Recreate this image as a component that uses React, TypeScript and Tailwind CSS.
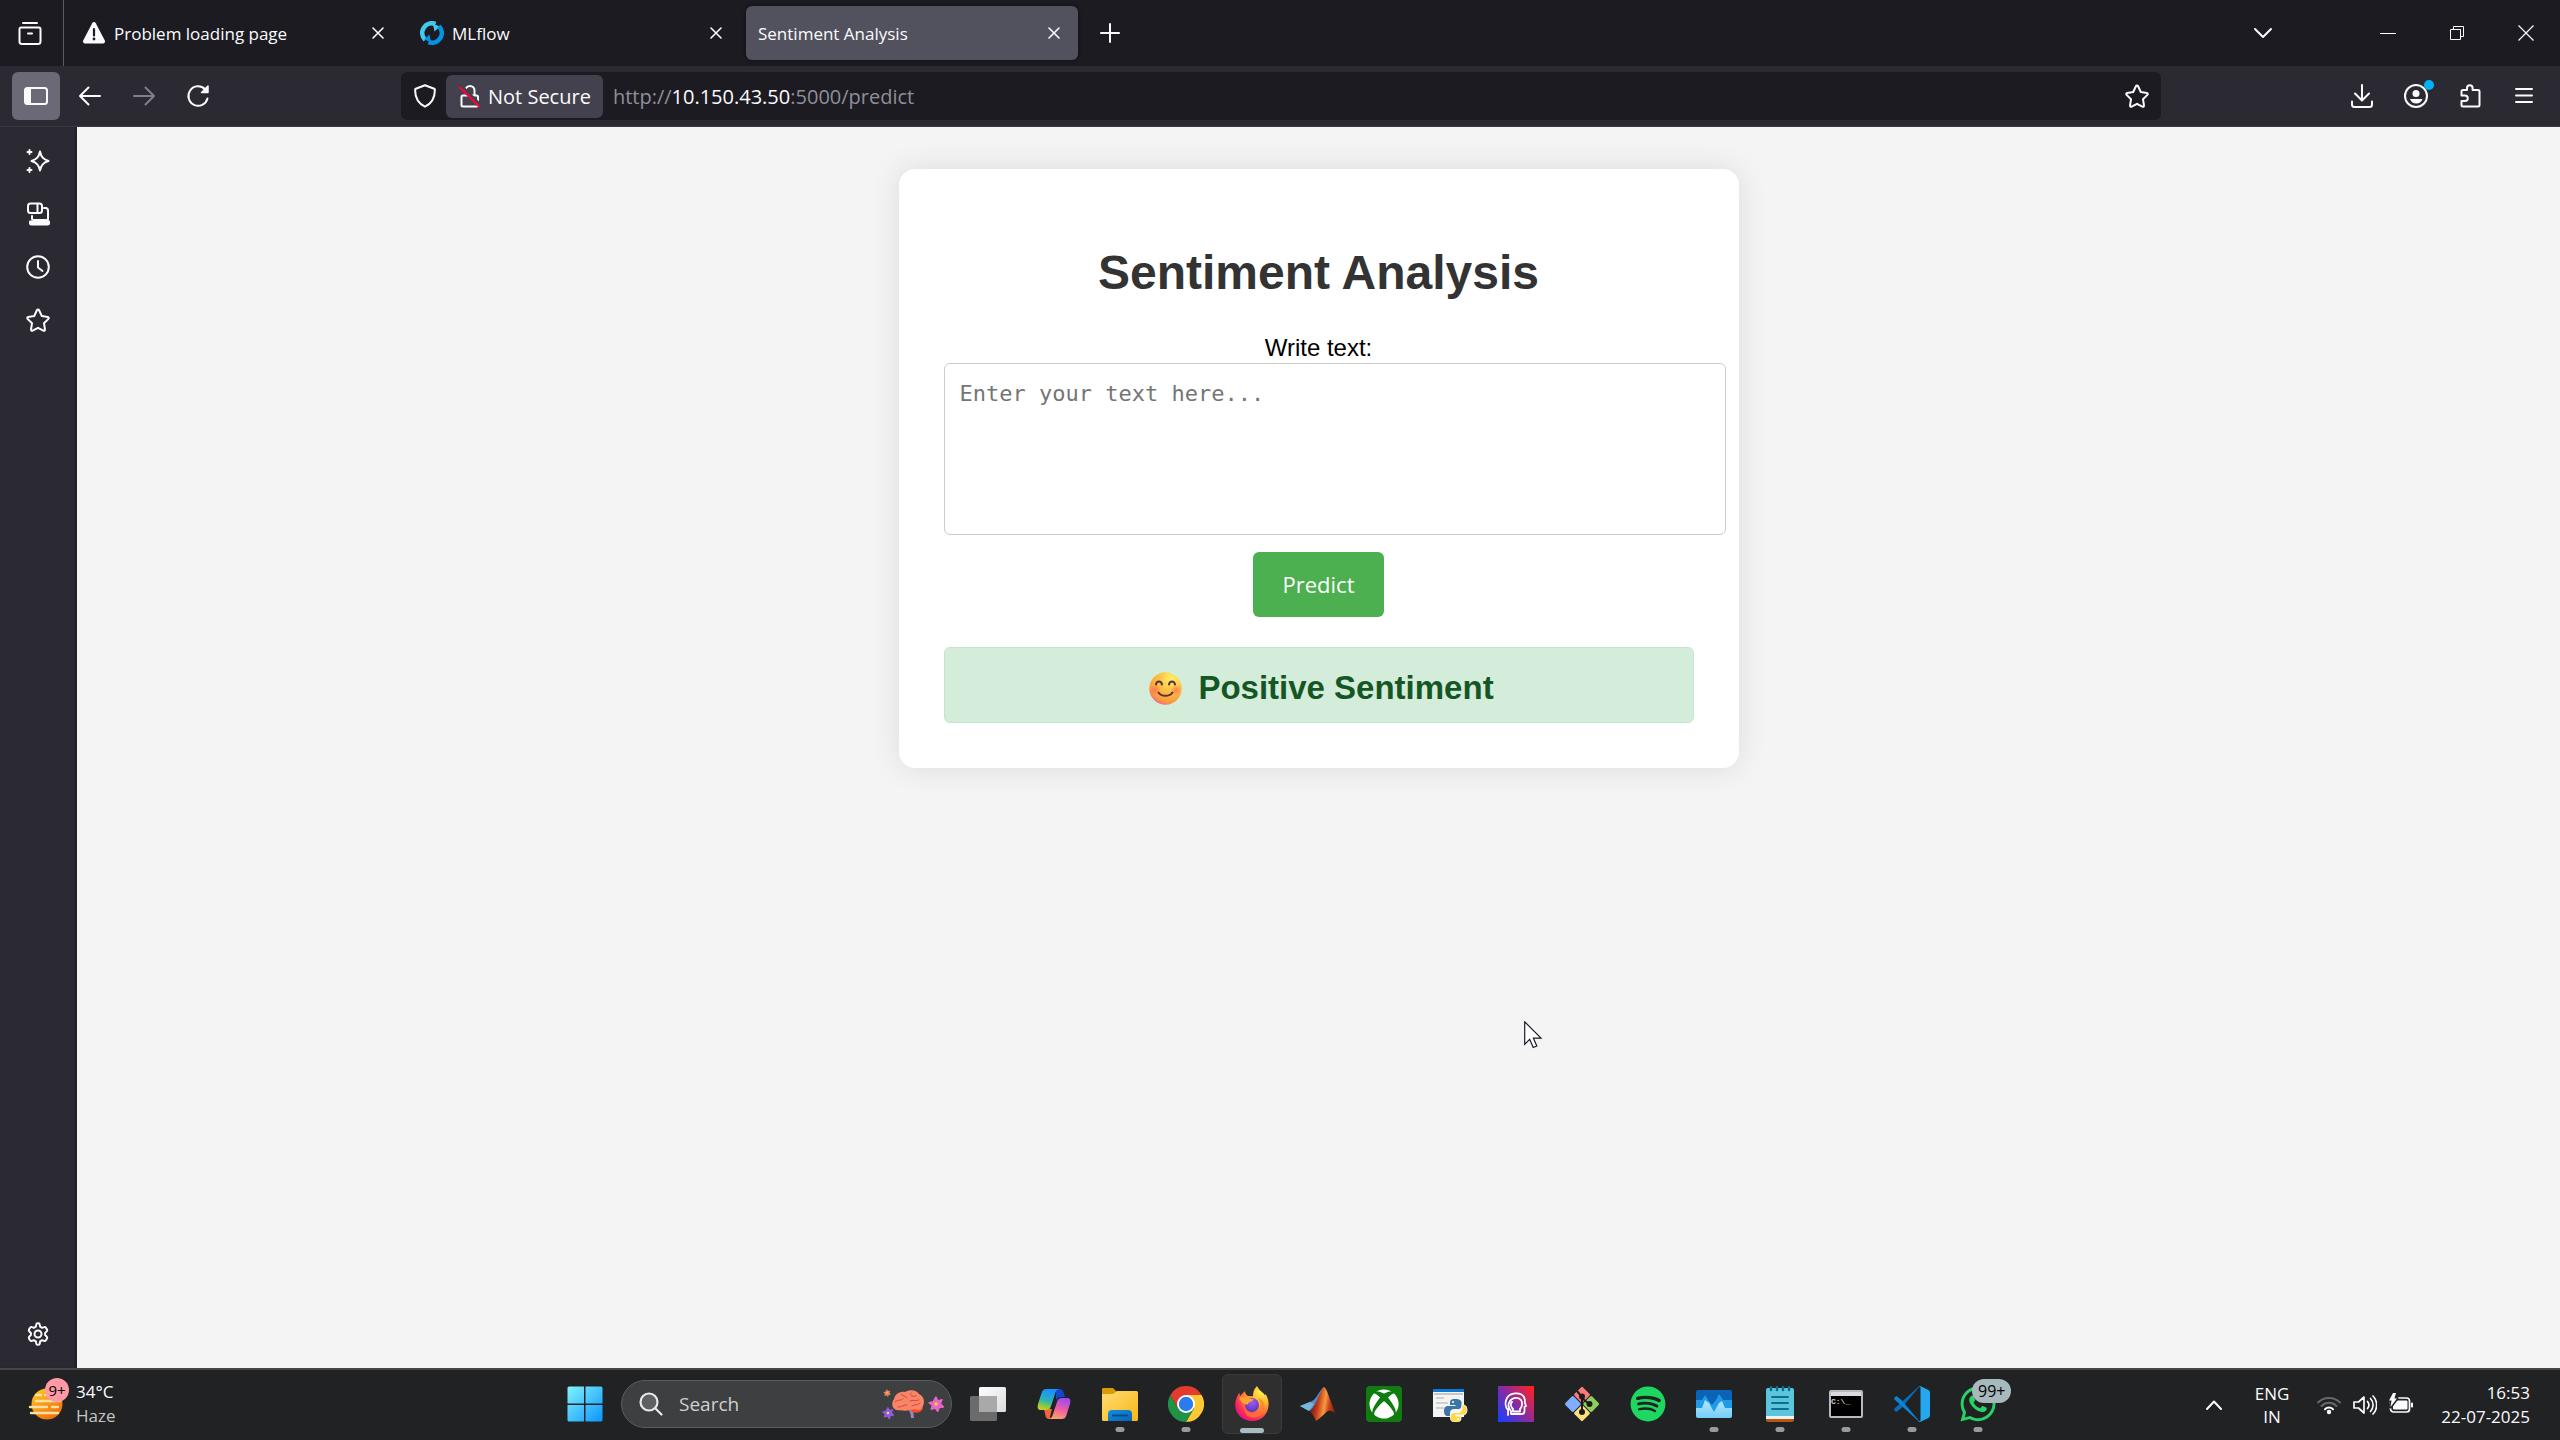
import React from "react";
import type { ReactNode } from "react";
import { FaSpotify, FaWhatsapp, FaXbox } from "react-icons/fa";

type LineProps = { children: ReactNode; className?: string; box?: string };

function Line({ children, className = "size-6", box = "0 0 24 24" }: LineProps) {
  return (
    <svg
      viewBox={box}
      className={className}
      fill="none"
      stroke="currentColor"
      strokeWidth="2"
      strokeLinecap="round"
      strokeLinejoin="round"
      aria-hidden="true"
    >
      {children}
    </svg>
  );
}

const CloseGlyph = () => (
  <Line className="size-3" box="0 0 12 12">
    <path d="M1 1l10 10M11 1L1 11" strokeWidth="1.6" />
  </Line>
);

const StarIcon = () => (
  <Line>
    <path d="M12 1.6c.5 0 .9.3 1.1.7l2.7 5.7 6 .9c1 .2 1.300 1.300.6 2l-4.400 4.400 1 6.200c.2.9-.8 1.600-1.600 1.200L12 19.800l-5.400 2.900c-.8.4-1.800-.3-1.600-1.200l1-6.200L1.600 10.900c-.7-.7-.4-1.800.6-2l6-.9 2.700-5.700c.2-.4.6-.7 1.100-.7z" />
  </Line>
);

/* ---------- Tab strip ---------- */

const WarningIcon = () => (
  <svg viewBox="0 0 24 24" className="size-6" aria-hidden="true">
    <path d="M10.200 2.200c.8-1.500 2.800-1.500 3.600 0l9 17.200c.7 1.400-.3 3-1.800 3H3c-1.500 0-2.500-1.600-1.800-3z" fill="#fbfbfe" />
    <path d="M12 8v6.500" stroke="#1c1b22" strokeWidth="2.200" strokeLinecap="round" />
    <circle cx="12" cy="18" r="1.400" fill="#1c1b22" />
  </svg>
);

const MlflowIcon = () => (
  <svg viewBox="0 0 24 24" className="size-6" aria-hidden="true">
    <path d="M5.200 18.800A9.600 9.600 0 0 1 15.500 3" fill="none" stroke="#43c9ed" strokeWidth="4.600" />
    <path d="M13 3l7 2.500-5.500 5z" fill="#43c9ed" />
    <path d="M18.800 5.200A9.600 9.600 0 0 1 8.500 21" fill="none" stroke="#0194e2" strokeWidth="4.600" />
    <path d="M11 21l-7-2.500 5.500-5z" fill="#0194e2" />
  </svg>
);

type TabProps = { title: string; icon?: ReactNode; active?: boolean };

function Tab({ title, icon, active = false }: TabProps) {
  return (
    <div
      role="tab"
      aria-selected={active}
      className={
        active
          ? "flex h-[54px] w-[332px] items-center gap-2 rounded-md bg-[#52525e] px-3 shadow-[0_0_4px_rgba(0,0,0,0.5)]"
          : "flex h-[54px] w-[332px] items-center gap-2 rounded-md px-3"
      }
    >
      {icon}
      <span className="flex-1 truncate pt-0.5">{title}</span>
      <button aria-label={`Close ${title}`} className="grid size-6 place-items-center">
        <CloseGlyph />
      </button>
    </div>
  );
}

function TabStrip() {
  return (
    <header className="flex h-[66px] shrink-0 items-center bg-[#1c1b22] text-[17px]">
      <button aria-label="Recent browsing" className="grid h-full w-16 place-items-center border-r border-[#5b5b66] pr-1">
        <Line>
          <path d="M5 2h14M3 6.500h18a1.500 1.500 0 0 1 1.500 1.500v12.500A2.500 2.500 0 0 1 20 23H4a2.500 2.500 0 0 1-2.500-2.500V8A1.500 1.500 0 0 1 3 6.500zM10 12.500h4" />
        </Line>
      </button>
      <div role="tablist" className="ml-1.5 flex gap-1.5">
        <Tab title="Problem loading page" icon={<WarningIcon />} />
        <Tab title="MLflow" icon={<MlflowIcon />} />
        <Tab title="Sentiment Analysis" active />
      </div>
      <button aria-label="New tab" className="ml-2 grid size-12 place-items-center">
        <Line className="size-5" box="0 0 20 20">
          <path d="M10 1v18M1 10h18" />
        </Line>
      </button>
      <div className="ml-auto flex items-center">
        <button aria-label="List all tabs" className="mr-[66px] grid size-12 place-items-center">
          <Line className="size-5" box="0 0 20 20">
            <path d="M2 6l8 8 8-8" />
          </Line>
        </button>
        <button aria-label="Minimize" className="grid h-12 w-[69px] place-items-center">
          <span className="h-px w-4 bg-[#fbfbfe]" />
        </button>
        <button aria-label="Restore" className="grid h-12 w-[69px] place-items-center">
          <svg viewBox="0 0 14 14" className="size-3.5" fill="none" stroke="#fbfbfe" aria-hidden="true">
            <path d="M.5 3.500h10v10H.5zM3.500 3.500v-3h10v10h-3" />
          </svg>
        </button>
        <button aria-label="Close window" className="grid h-12 w-[69px] place-items-center">
          <svg viewBox="0 0 16 16" className="size-4" fill="none" stroke="#fbfbfe" strokeWidth="1.200" aria-hidden="true">
            <path d="M.5.5l15 15M15.500.5l-15 15" />
          </svg>
        </button>
      </div>
    </header>
  );
}

/* ---------- Toolbar ---------- */

function Toolbar() {
  return (
    <nav aria-label="Navigation" className="flex h-[61px] shrink-0 items-center border-b border-[#3a3944] bg-[#2b2a33] pl-3">
      <button aria-label="Toggle sidebar" className="grid size-12 place-items-center rounded-md bg-[#6a6975]">
        <svg viewBox="0 0 24 20" className="h-5 w-6" aria-hidden="true">
          <rect x="1" y="2" width="22" height="16" rx="2.500" fill="none" stroke="#fbfbfe" strokeWidth="2" />
          <path d="M1 3h6v14H1z" fill="#fbfbfe" />
        </svg>
      </button>
      <button aria-label="Back" className="ml-1.5 grid size-12 place-items-center">
        <Line>
          <path d="M22 12H2M10.500 3.500L2 12l8.500 8.500" />
        </Line>
      </button>
      <button aria-label="Forward" disabled className="ml-1.5 grid size-12 place-items-center text-[#807f88]">
        <Line>
          <path d="M2 12h20M13.500 3.500L22 12l-8.500 8.500" />
        </Line>
      </button>
      <button aria-label="Reload" className="ml-1.5 grid size-12 place-items-center">
        <Line>
          <path d="M21.500 14.500A9.700 9.700 0 1 1 19 5.200" />
          <path d="M22 2v6.500h-6.500z" fill="currentColor" strokeWidth="1.500" />
        </Line>
      </button>
      <div className="ml-[179px] flex h-12 flex-1 items-center rounded-md bg-[#1c1b22] text-xl">
        <button aria-label="Tracking protection" className="grid h-full w-[45px] place-items-center pl-[3px]">
          <Line>
            <path d="M12 1.300l9.200 3.400c.4.2.7.5.7 1 0 7-2.400 13.300-9.900 17-7.500-3.700-9.900-10-9.900-17 0-.5.300-.8.7-1z" />
          </Line>
        </button>
        <button className="flex h-[43px] items-center gap-1.5 rounded-md bg-[#42414d] px-3">
          <Line>
            <path d="M7.500 6.500a4.500 4.500 0 0 1 9 0V11M5 11.500h13.500a1.500 1.500 0 0 1 1.500 1.500v8a1.500 1.500 0 0 1-1.500 1.500H5A1.500 1.500 0 0 1 3.500 21v-8A1.500 1.500 0 0 1 5 11.500z" />
            <path d="M4 2.500l19 19" stroke="#42414d" strokeWidth="3" />
            <path d="M2 3.500l19 19" stroke="#ff0039" />
          </Line>
          <span className="pt-0.5">Not Secure</span>
        </button>
        <div role="textbox" aria-label="Address" tabIndex={0} className="ml-2.5 flex-1 pt-0.5 text-[#8f8f99]">
          http://<span className="text-[#fbfbfe]">10.150.43.50</span>:5000/predict
        </div>
        <button aria-label="Bookmark this page" className="grid size-12 place-items-center">
          <StarIcon />
        </button>
      </div>
      <div className="ml-[177px] flex items-center gap-1.5 pr-3">
        <button aria-label="Downloads" className="grid size-12 place-items-center">
          <Line>
            <path d="M12 1v15M5 9.500l7 7 7-7M2 17.500v3A2.500 2.500 0 0 0 4.500 23h15a2.500 2.500 0 0 0 2.500-2.500v-3" />
          </Line>
        </button>
        <button aria-label="Account" className="relative grid size-12 place-items-center">
          <Line>
            <circle cx="12" cy="12" r="11" />
            <circle cx="12" cy="9.500" r="3.500" fill="currentColor" stroke="none" />
            <path d="M6 15h12.500c-1 3-3.500 4.500-6.200 4.500S7 18 6 15z" fill="currentColor" stroke="none" />
          </Line>
          <span className="absolute top-2 right-1.5 size-2.5 rounded-full bg-[#00b3f4]" />
        </button>
        <button aria-label="Extensions" className="grid size-12 place-items-center">
          <Line>
            <path d="M3.500 10.500V7.500A1.500 1.500 0 0 1 5 6h4V4a2.800 2.800 0 0 1 5.600 0v2h5.400A1.500 1.500 0 0 1 21.500 7.500V21a1.500 1.500 0 0 1-1.500 1.500H5A1.500 1.500 0 0 1 3.500 21v-4H7a2.800 2.800 0 0 0 0-5.600H3.500z" />
          </Line>
        </button>
        <button aria-label="Application menu" className="grid size-12 place-items-center">
          <Line className="h-6 w-5" box="0 0 20 24">
            <path d="M2 5h16M2 11.500h16M2 18h16" />
          </Line>
        </button>
      </div>
    </nav>
  );
}

/* ---------- Sidebar ---------- */

function Sidebar() {
  return (
    <aside className="flex w-[77px] shrink-0 flex-col items-center bg-[#2b2a33] pt-[7px] pr-0.5 pb-2.5 shadow-[inset_-2px_0_2px_rgba(0,0,0,0.25)]">
      <button aria-label="AI chatbot" className="grid h-[53px] w-12 place-items-center">
        <Line>
          <path d="M14 2.500c1.200 5.500 3.200 7.800 8.500 9.500-5.300 1.700-7.300 4-8.500 9.500-1.200-5.500-3.200-7.800-8.500-9.500 5.300-1.700 7.300-4 8.500-9.500z" />
          <path d="M3.500 1v4M1.500 3h4M3.500 19v4M1.500 21h4" />
        </Line>
      </button>
      <button aria-label="Synced tabs" className="grid h-[53px] w-12 place-items-center">
        <Line>
          <rect x="2" y="1.500" width="14" height="9.500" rx="2.500" />
          <path d="M11.500 2v8.500M18 6h1.500A2.500 2.500 0 0 1 22 8.500V18M6 14v2.500A1.500 1.500 0 0 0 7.500 18H22" />
          <path d="M4 19.500h19V21a1.500 1.500 0 0 1-1.500 1.500h-16A1.500 1.500 0 0 1 4 21z" fill="currentColor" />
        </Line>
      </button>
      <button aria-label="History" className="grid h-[53px] w-12 place-items-center">
        <Line>
          <circle cx="12" cy="12" r="10.800" />
          <path d="M12 6v6.500l4.500 3.500" />
        </Line>
      </button>
      <button aria-label="Bookmarks" className="grid h-[53px] w-12 place-items-center">
        <StarIcon />
      </button>
      <button aria-label="Customize sidebar" className="mt-auto grid size-12 place-items-center">
        <Line>
          <path d="M10.200 2.700c.1-.8.700-1.400 1.500-1.400h.6c.8 0 1.400.6 1.500 1.400l.3 2 2 1.100 1.900-.7c.7-.3 1.500 0 1.900.6l1.100 1.900c.4.7.2 1.500-.4 2l-1.500 1.300v2.200l1.500 1.300c.6.500.8 1.300.4 2l-1.100 1.900c-.4.600-1.200.9-1.900.6l-1.900-.7-2 1.100-.3 2c-.1.800-.7 1.400-1.500 1.400h-.6c-.8 0-1.400-.6-1.500-1.400l-.3-2-2-1.100-1.900.7c-.7.3-1.500 0-1.900-.6L3 16.400c-.4-.7-.2-1.500.4-2l1.500-1.300v-2.200L3.400 9.600c-.6-.5-.8-1.300-.4-2l1.100-1.900c.4-.6 1.200-.9 1.900-.6l1.900.7 2-1.100z" />
          <circle cx="12" cy="12" r="3.500" />
        </Line>
      </button>
    </aside>
  );
}

/* ---------- Page ---------- */

const SmileEmoji = () => (
  <svg viewBox="0 0 33 33" className="size-[33px]" role="img" aria-label="Smiling face">
    <defs>
      <radialGradient id="face" cx="0.68" cy="0.2" r="0.9">
        <stop offset="0" stopColor="#fff06b" />
        <stop offset="0.45" stopColor="#fdc041" />
        <stop offset="0.8" stopColor="#fb9a3c" />
        <stop offset="1" stopColor="#e8609a" />
      </radialGradient>
      <radialGradient id="cheek">
        <stop offset="0" stopColor="#ff6a5f" stopOpacity="0.8" />
        <stop offset="1" stopColor="#ff6a5f" stopOpacity="0" />
      </radialGradient>
    </defs>
    <circle cx="16.500" cy="16.500" r="16.200" fill="url(#face)" />
    <circle cx="6" cy="18" r="5.500" fill="url(#cheek)" />
    <circle cx="27" cy="18" r="5.500" fill="url(#cheek)" />
    <g fill="none" stroke="#5a3140" strokeWidth="2" strokeLinecap="round">
      <path d="M7 12.500c.6-4 5.400-4 6 0M20 12.500c.6-4 5.400-4 6 0M9.500 20.500c3 4.400 11 4.400 14 0" />
    </g>
  </svg>
);

function SentimentPage() {
  return (
    <main className="flex flex-1 items-start justify-center bg-[#f4f4f4] pt-[42px] font-['Liberation_Sans',Arial,sans-serif] text-2xl text-black">
      <section className="w-[840px] rounded-2xl bg-white p-[45px] text-center shadow-[0_0_30px_rgba(0,0,0,0.1)]">
        <h1 className="mt-[31px] text-5xl leading-[56px] font-bold text-[#333333]">Sentiment Analysis</h1>
        <form className="mt-8" onSubmit={(e) => e.preventDefault()}>
          <label htmlFor="text" className="block leading-[30px]">
            Write text:
          </label>
          <textarea
            id="text"
            placeholder="Enter your text here..."
            className="block h-[172px] w-[calc(100%+32px)] max-w-none resize-none rounded-md border border-[#cccccc] bg-white p-[15px] font-['DejaVu_Sans_Mono',monospace] text-[22px] leading-[30px] placeholder:text-[#757575]"
          />
          <button
            type="submit"
            className="mt-[17px] h-[65px] rounded-md bg-[#4caf50] px-[30px] font-['Open_Sans',sans-serif] text-[22px] text-white"
          >
            Predict
          </button>
        </form>
        <div className="mt-[30px] flex h-[76px] items-center justify-center gap-4 rounded-md border border-[#c3e6cb] bg-[#d4edda] pt-1.5 pl-1.5 text-[33px] font-bold text-[#155724]">
          <SmileEmoji />
          <span>Positive Sentiment</span>
        </div>
      </section>
    </main>
  );
}

/* ---------- Taskbar icons ---------- */

const WeatherIcon = () => (
  <svg viewBox="0 0 36 36" className="size-9" aria-hidden="true">
    <defs>
      <linearGradient id="sun" x1="0" y1="0" x2="0.700" y2="1">
        <stop offset="0" stopColor="#ffcf1f" />
        <stop offset="1" stopColor="#ef6d0c" />
      </linearGradient>
    </defs>
    <circle cx="19" cy="18" r="15.500" fill="url(#sun)" />
    <g stroke="#f7dfa6" strokeWidth="2.400" strokeLinecap="round">
      <path d="M8 9h5M17 9h12M8 15h24M2 21h17M24 21h6M3 27h27" />
    </g>
  </svg>
);

const StartIcon = () => (
  <svg viewBox="0 0 36 36" className="size-9" aria-hidden="true">
    <defs>
      <linearGradient id="win" gradientUnits="userSpaceOnUse" x1="0" y1="0" x2="36" y2="36">
        <stop offset="0" stopColor="#82f5ff" />
        <stop offset="1" stopColor="#0a93fb" />
      </linearGradient>
    </defs>
    <path d="M2 .5h15v17H.5V2A1.500 1.500 0 0 1 2 .5zM18.500.5H34A1.500 1.500 0 0 1 35.500 2v15.500h-17zM.5 19H17v16.500H2A1.500 1.500 0 0 1 .5 34zM18.500 19h17v15a1.500 1.500 0 0 1-1.500 1.500H18.500z" fill="url(#win)" />
  </svg>
);

const Blossom = ({ x, y, s, color }: { x: number; y: number; s: number; color: string }) => (
  <g transform={`translate(${x} ${y}) scale(${s})`}>
    <path d="M0-8l2 4.500 5-1.500-2 4.700 3.500 3.600L3.500 4 2 8.500-.8 4.600-5.500 6l1.300-4.700L-8-1.500l4.800-1z" fill={color} strokeWidth="2" stroke={color} strokeLinejoin="round" />
    <circle r="2" fill="#ffd23e" />
  </g>
);

const BrainArt = () => (
  <svg viewBox="0 0 62 32" className="h-8 w-[62px]" aria-hidden="true">
    <Blossom x={5} y={5} s={0.4} color="#f0875f" />
    <Blossom x={6} y={25} s={0.65} color="#8f5be0" />
    <Blossom x={54} y={16} s={0.85} color="#e765c5" />
    <path d="M25 20l6 1 1 9h-3c0-4-1-7-4-10z" fill="#9a83cf" />
    <path d="M28 22c3 4 11 4 13-2l-5-3z" fill="#ff4a26" />
    <path d="M14 22c-4-2-5-7-2-11 1-5 6-8 11-7 5-3 12-2 14 2 5 2 6 8 4 12-1 4-5 5-9 3-5 2-10 2-18 1z" fill="#f98468" />
    <path d="M13 14c3-3 6-1 8-3M19 6c1 3 5 1 6 4M29 5c-2 3 2 4 5 3M16 19c4 1 5-3 9-2M28 13c3-2 5 1 9-1M30 18c3-2 5 0 8-3" fill="none" stroke="#c9503c" strokeWidth="1" strokeLinecap="round" />
  </svg>
);

const TaskViewIcon = () => (
  <svg viewBox="0 0 36 36" className="size-9" aria-hidden="true">
    <defs>
      <linearGradient id="tv" x1="0" y1="0" x2="1" y2="1">
        <stop offset="0" stopColor="#ffffff" />
        <stop offset="1" stopColor="#dcdcdc" />
      </linearGradient>
    </defs>
    <rect x="9" y="1" width="27" height="25" rx="1.500" fill="url(#tv)" />
    <rect x="0" y="10" width="27" height="25" rx="1.500" fill="#6b6b6b" />
    <path d="M9 10h18v16H9z" fill="#a9a9a9" />
  </svg>
);

const CopilotIcon = () => (
  <svg viewBox="0 0 36 36" className="size-9" aria-hidden="true">
    <defs>
      <linearGradient id="cpa" x1="0.300" y1="0" x2="0" y2="1">
        <stop offset="0" stopColor="#1a90ff" />
        <stop offset="0.5" stopColor="#2fb5b0" />
        <stop offset="0.75" stopColor="#8ecb3c" />
        <stop offset="1" stopColor="#f0c21e" />
      </linearGradient>
      <linearGradient id="cpb" x1="0.500" y1="0" x2="0.200" y2="1">
        <stop offset="0" stopColor="#a24bef" />
        <stop offset="0.5" stopColor="#f0609f" />
        <stop offset="1" stopColor="#ffa766" />
      </linearGradient>
    </defs>
    <path d="M20 3h4c2 0 3 1.500 3.500 3l1.500 5h-4c-3 0-4 1-5 4z" fill="#1546cf" />
    <path d="M8 23h8l-2 8c0 1 1 2 2 2h-3c-2 0-3-1-3.500-3z" fill="#f2643c" />
    <path d="M10 3h14c-3 0-4 1.500-5 5l-4 12c-1 3-2 4-5 4H5c-3 0-4-2-3-6L5.500 7C6.500 4 8 3 10 3z" fill="url(#cpa)" />
    <path d="M26 33H12c3 0 4-1.500 5-5l4-12c1-3 2-4 5-4h5c3 0 4 2 3 6l-3.500 11c-1 3-2.500 4-4.500 4z" fill="url(#cpb)" />
  </svg>
);

const FolderIcon = () => (
  <svg viewBox="0 0 36 36" className="size-9" aria-hidden="true">
    <defs>
      <linearGradient id="fold" x1="0" y1="0" x2="1" y2="1">
        <stop offset="0" stopColor="#ffdd73" />
        <stop offset="1" stopColor="#f8b616" />
      </linearGradient>
      <linearGradient id="foldblue" x1="0" y1="0" x2="1" y2="1">
        <stop offset="0" stopColor="#1391e0" />
        <stop offset="1" stopColor="#0a62b5" />
      </linearGradient>
    </defs>
    <path d="M0 3.500C0 2.500.5 2 1.500 2H11l4 4h6v6H0z" fill="#dc9a08" />
    <path d="M0 8h11l4-3h19.500A1.500 1.500 0 0 1 36 6.500v27a1.500 1.500 0 0 1-1.500 1.500h-33A1.500 1.500 0 0 1 0 33.500z" fill="url(#fold)" />
    <path d="M6 35v-7a4 4 0 0 1 4-4h16a4 4 0 0 1 4 4v7z" fill="url(#foldblue)" />
    <path d="M11 29.500h14" stroke="#0a4a86" strokeWidth="1.800" strokeLinecap="round" />
  </svg>
);

const ChromeIcon = () => (
  <svg viewBox="0 0 36 36" className="size-9" aria-hidden="true">
    <path d="M18 9h15.590A18 18 0 0 1 18 36l7.800-13.500z" fill="#fcc934" />
    <path d="M10.200 22.500L2.410 9A18 18 0 0 0 18 36l7.800-13.500z" fill="#1f9246" />
    <path d="M18 9h15.590A18 18 0 0 0 2.410 9l7.800 13.500z" fill="#e33b2e" />
    <circle cx="18" cy="18" r="9" fill="#fff" />
    <circle cx="18" cy="18" r="7.200" fill="#2a7cee" />
  </svg>
);

const FirefoxIcon = () => (
  <svg viewBox="0 0 36 36" className="size-9" aria-hidden="true">
    <defs>
      <radialGradient id="ffx" cx="0.800" cy="0.150" r="1">
        <stop offset="0" stopColor="#fff44f" />
        <stop offset="0.35" stopColor="#ffb62a" />
        <stop offset="0.6" stopColor="#ff7139" />
        <stop offset="0.85" stopColor="#f8215f" />
        <stop offset="1" stopColor="#d8158f" />
      </radialGradient>
      <radialGradient id="ffglobe" cx="0.500" cy="0.300" r="0.700">
        <stop offset="0" stopColor="#a05cf5" />
        <stop offset="1" stopColor="#5a35b8" />
      </radialGradient>
    </defs>
    <path d="M23 0c1 3 4 5 6 7 1 .6 1.500 1.500 2 2.500l.7-1.500C34 12 35 16 34.500 20 33.500 29 27 35 18 35S1.500 28.500 1.200 19.500C1 14.500 3 10 5.500 6.500c0 1.500.2 2.500.7 3.200C8 8 10 6 11 5c0 2 1 4 3 5 2 .2 3 .2 5 .2C19 6 20 3 23 0z" fill="url(#ffx)" />
    <circle cx="18" cy="19" r="7" fill="url(#ffglobe)" />
    <path d="M5 12c4-2 7-1.500 9 0 2 1 4 1 5.500 1.200-.5 2-3 2.500-4.500 3.300-1 .8-.5 1.800-2 2-2.500.2-5-1-8-6.500z" fill="#ffa22e" />
    <path d="M11 19c0 5 3 8 7.500 8 5 0 8-3.500 8-8 0-3-1-5-3-7 5 1 7.500 5 7 10-.7 6-5.500 9.500-11.500 9.500S9 27 11 19z" fill="#ff7a30" opacity="0.700" />
  </svg>
);

const MatlabIcon = () => (
  <svg viewBox="0 0 36 36" className="size-9" aria-hidden="true">
    <defs>
      <linearGradient id="ml" x1="0" y1="0.300" x2="1" y2="0.500">
        <stop offset="0" stopColor="#3a1020" />
        <stop offset="0.35" stopColor="#c03a1c" />
        <stop offset="0.6" stopColor="#f79a3b" />
        <stop offset="0.75" stopColor="#d2461e" />
        <stop offset="1" stopColor="#7d1a10" />
      </linearGradient>
    </defs>
    <path d="M0 20l10-4c3-1 5-3 7-6s5-8 7-9c-2 5-5 13-8 18-3 3-5 6-7 6z" fill="#4d8fc9" />
    <path d="M0 20l9 5 5-7-4-2z" fill="#78b6df" />
    <path d="M9 25c3-1 5-5 8-11s5-12 7-13c3 1 6 14 12 27-3-2-5-4-8-3-3 2-6 6-12 10-2-5-4-8-7-10z" fill="url(#ml)" />
  </svg>
);

const XboxIcon = () => (
  <span className="grid size-9 place-items-center rounded-sm bg-[#107c10] text-white">
    <FaXbox className="size-[30px]" aria-hidden="true" />
  </span>
);

const PythonIcon = () => (
  <svg viewBox="0 0 36 36" className="size-9" aria-hidden="true">
    <path d="M1 3h31v28H1z" fill="#f4f4f4" />
    <path d="M1 3h31v3H1z" fill="#0f78d4" />
    <path d="M2 8h29" stroke="#9a9a9a" />
    <path d="M4 12h8M4 17h12M4 22h8" stroke="#c4c4c4" strokeWidth="1.500" />
    <path d="M23 13c-4 0-5 1.500-5 3.500V19h5.500v1H16c-3 0-4 2.300-4 5s1 5 3.500 5H18v-3c0-2.500 1.500-4 4-4h4.500c2 0 3-1.500 3-3.500v-3c0-2-2-3.500-6.500-3.500z" fill="#3b76a8" />
    <path d="M24 36c4 0 5-1.500 5-3.500V30h-5.500v-1H31c3 0 4-2.300 4-5s-1-5-3.500-5H30v3c0 2.500-1.500 4.500-4 4.500h-4c-2 0-3.500 1-3.500 3v3c0 2 1.500 3.500 5.500 3.500z" fill="#ffd949" stroke="#fff" strokeWidth="0.800" />
    <circle cx="21" cy="16" r="1" fill="#fff" />
    <circle cx="26" cy="33" r="1" fill="#fff" />
  </svg>
);

const MindIcon = () => (
  <svg viewBox="0 0 36 36" className="size-9" aria-hidden="true">
    <defs>
      <linearGradient id="mind" x1="0" y1="0.900" x2="1" y2="0.100">
        <stop offset="0" stopColor="#1b3ffc" />
        <stop offset="0.5" stopColor="#8a2aa0" />
        <stop offset="1" stopColor="#ff2222" />
      </linearGradient>
    </defs>
    <path d="M0 0h36v36H0z" fill="url(#mind)" />
    <g fill="none" stroke="#fff" strokeWidth="1.800" strokeLinejoin="round" strokeLinecap="round">
      <path d="M10 29V24c-3-3-3-8-1-12 3-5 13-7 17-1 1 2 1 4 1 6l1 3-1.500 1v4c0 2-1 3-3 3H13V25c-3-3-3-7-1-10 3-4 9-4 11-1 2 3 1 7-1 9v2.500h-7V23c-2-2-3-5-1-7" />
    </g>
  </svg>
);

const GitIcon = () => (
  <svg viewBox="0 0 36 36" className="size-9" aria-hidden="true">
    <g transform="rotate(45 18 18)">
      <rect x="5.500" y="5.500" width="12" height="12" rx="1.500" fill="#f97c7c" />
      <rect x="18.500" y="5.500" width="12" height="12" rx="1.500" fill="#8bd05f" />
      <rect x="5.500" y="18.500" width="12" height="12" rx="1.500" fill="#7fadff" />
      <rect x="18.500" y="18.500" width="12" height="12" rx="1.500" fill="#ffe07a" />
    </g>
    <path d="M13 5l5 6v15M18 12l7 6" stroke="#1f1a1a" strokeWidth="2" fill="none" />
    <circle cx="18" cy="10.500" r="3" fill="#1f1a1a" />
    <circle cx="25.500" cy="18" r="3" fill="#1f1a1a" />
    <circle cx="18" cy="26" r="3" fill="#1f1a1a" />
  </svg>
);

const MonitorIcon = () => (
  <svg viewBox="0 0 36 36" className="size-9" aria-hidden="true">
    <defs>
      <linearGradient id="mon" x1="0" y1="0" x2="0" y2="1">
        <stop offset="0" stopColor="#b5e6fc" />
        <stop offset="1" stopColor="#74cdfa" />
      </linearGradient>
    </defs>
    <rect x="0" y="4" width="36" height="28" rx="2" fill="#0b63b8" />
    <path d="M0 14h6l3-5 4 6 3 4 4-5 3-6 4 6h9v16H0z" fill="#1f9ae6" />
    <path d="M0 22h6l3-8 4 3 5 9 5-9 3-2 3 7h7v8a2 2 0 0 1-2 2H2a2 2 0 0 1-2-2z" fill="url(#mon)" />
  </svg>
);

const NotepadIcon = () => (
  <svg viewBox="0 0 36 36" className="size-9" aria-hidden="true">
    <path d="M4 28h28v6a2 2 0 0 1-2 2H6a2 2 0 0 1-2-2z" fill="#bb5512" />
    <path d="M4 28h28v5H4z" fill="#f1f1f1" />
    <path d="M4 4a2 2 0 0 1 2-2h24a2 2 0 0 1 2 2v26H4z" fill="#5cc5dd" />
    <path d="M9 1v3M15 1v3M21 1v3M27 1v3" stroke="#0d6f8c" strokeWidth="2.500" strokeLinecap="round" />
    <path d="M10 11h16M10 17h16M10 23h16" stroke="#0d6f8c" strokeWidth="2" strokeLinecap="round" />
  </svg>
);

const TerminalIcon = () => (
  <span className="flex h-7 w-[34px] flex-col rounded-xs border-2 border-[#b9b9bd] bg-black">
    <span className="h-1 bg-[#dadade]" />
    <span className="text-left font-['Liberation_Mono',monospace] text-[8px] leading-3 font-bold text-[#d0d0d0]">C:\_</span>
  </span>
);

const CodeIcon = () => (
  <svg viewBox="0 0 36 36" className="size-9" aria-hidden="true">
    <path d="M26 0L7.500 22 3 25.500c-.5.400-1 .3-1.500 0L.5 24.300c-.5-.6-.5-1.200 0-1.700L24.500.8z" fill="#0a6cb8" />
    <path d="M26 36L7.500 14 3 10.500c-.5-.4-1-.3-1.500 0L.5 11.700c-.5.6-.5 1.200 0 1.700l24 21.800z" fill="#0a84d6" />
    <path d="M26 8L13.500 18 26 28z" fill="#202223" />
    <path d="M26 36c-1 0-1.700-.5-2-1 1.200 1 2.500.3 2.500-1V2c0-1.300-1.300-2-2.500-1 .5-.8 1.300-1.200 2.500-.8l7.500 3.600c1.200.6 2 1.600 2 3v22.400c0 1.400-.8 2.400-2 3z" fill="#25a7f0" />
  </svg>
);

type AppProps = { name: string; children: ReactNode; running?: boolean; active?: boolean; badge?: string };

function TaskApp({ name, children, running = false, active = false, badge }: AppProps) {
  return (
    <button
      aria-label={name}
      className={
        active
          ? "relative grid size-[60px] place-items-center rounded-md border border-[#3a3a3a] bg-[#2f2f2f]"
          : "relative grid size-[60px] place-items-center"
      }
    >
      {children}
      {running && <span className="absolute bottom-0.5 left-1/2 h-[5px] w-[9px] -translate-x-1/2 rounded-full bg-[#9a9a9a]" />}
      {active && <span className="absolute bottom-0 left-1/2 h-[5px] w-6 -translate-x-1/2 rounded-full bg-[#a9bcc4]" />}
      {badge && (
        <span className="absolute top-[5px] left-6 rounded-full bg-[#a8b9bd] px-1.5 text-base leading-6 text-black">{badge}</span>
      )}
    </button>
  );
}

function Taskbar() {
  return (
    <footer className="grid h-[72px] shrink-0 grid-cols-[1fr_auto_1fr] items-center border-t-2 border-[#454545] bg-[#202223] text-[17px] leading-6">
      <button className="flex items-center gap-3 pb-0.5 pl-7 text-left">
        <span className="relative">
          <WeatherIcon />
          <span className="absolute -top-2 left-[17px] grid size-6 place-items-center rounded-full bg-[#ff9aa5] text-[15px] text-black">9+</span>
        </span>
        <span className="flex flex-col">
          <span>34°C</span>
          <span className="text-[#c4c4c4]">Haze</span>
        </span>
      </button>

      <div className="flex items-center gap-1.5 pb-0.5 pl-[3px]">
        <TaskApp name="Start">
          <StartIcon />
        </TaskApp>
        <label className="flex h-12 w-[331px] items-center gap-4 rounded-full border border-[#5a5c5d] bg-[#3d3f40] pr-[7px] pl-[17px]">
          <svg viewBox="0 0 24 24" className="size-6 shrink-0" fill="#5d6164" stroke="#e8eaec" strokeWidth="2.200" strokeLinecap="round" aria-hidden="true">
            <circle cx="10" cy="10" r="8.500" />
            <path d="M16.500 16.500l6 6" />
          </svg>
          <input
            type="search"
            aria-label="Search"
            placeholder="Search"
            className="w-0 flex-1 bg-transparent text-[19px] placeholder:text-[#cfd0d0] focus:outline-none"
          />
          <BrainArt />
        </label>
        <TaskApp name="Task view">
          <TaskViewIcon />
        </TaskApp>
        <TaskApp name="Copilot">
          <CopilotIcon />
        </TaskApp>
        <TaskApp name="File Explorer" running>
          <FolderIcon />
        </TaskApp>
        <TaskApp name="Chrome" running>
          <ChromeIcon />
        </TaskApp>
        <TaskApp name="Firefox" active>
          <FirefoxIcon />
        </TaskApp>
        <TaskApp name="MATLAB">
          <MatlabIcon />
        </TaskApp>
        <TaskApp name="Xbox">
          <XboxIcon />
        </TaskApp>
        <TaskApp name="Python">
          <PythonIcon />
        </TaskApp>
        <TaskApp name="Mind">
          <MindIcon />
        </TaskApp>
        <TaskApp name="Git">
          <GitIcon />
        </TaskApp>
        <TaskApp name="Spotify">
          <FaSpotify className="size-9 text-[#1ed760]" aria-hidden="true" />
        </TaskApp>
        <TaskApp name="Resource monitor" running>
          <MonitorIcon />
        </TaskApp>
        <TaskApp name="Notepad" running>
          <NotepadIcon />
        </TaskApp>
        <TaskApp name="Command Prompt" running>
          <TerminalIcon />
        </TaskApp>
        <TaskApp name="Visual Studio Code" running>
          <CodeIcon />
        </TaskApp>
        <TaskApp name="WhatsApp" running badge="99+">
          <FaWhatsapp className="size-10 text-[#25d366]" aria-hidden="true" />
        </TaskApp>
      </div>

      <div className="flex items-center justify-end pr-[30px]">
        <button aria-label="Show hidden icons" className="mr-[33px]">
          <Line className="size-4" box="0 0 16 16">
            <path d="M1 12l7-7.500 7 7.500" />
          </Line>
        </button>
        <button className="mr-7 text-center leading-[23px]">
          ENG
          <br />
          IN
        </button>
        <button aria-label="Network, volume and battery" className="mr-7 flex gap-3">
          <Line>
            <path d="M1 9.500a15.500 15.500 0 0 1 22 0M4.500 13a10.500 10.500 0 0 1 15 0" stroke="#686868" />
            <path d="M8 16.200a5.600 5.600 0 0 1 8 0" />
            <circle cx="12" cy="19" r="1.200" fill="currentColor" />
          </Line>
          <Line>
            <path d="M1 9v6h4.500l5.500 5V4L5.500 9zM14.500 8.500a5.500 5.500 0 0 1 0 7M17.500 5.500a9.500 9.500 0 0 1 0 13M20 3a13 13 0 0 1 0 18" strokeWidth="1.700" />
          </Line>
          <Line>
            <rect x="1.500" y="5" width="19" height="14" rx="3" strokeWidth="1.700" />
            <path d="M5 8.500h12.500v7H5z" fill="currentColor" />
            <path d="M23 10.500v3" strokeWidth="2.200" />
            <path d="M4 0L0 7.500h2.500L1.500 14l6.500-8.500H5.500L7 0z" fill="currentColor" stroke="#202223" strokeWidth="3" />
            <path d="M4 0L0 7.500h2.500L1.500 14l6.500-8.500H5.500L7 0z" fill="currentColor" stroke="none" />
          </Line>
        </button>
        <button className="text-right">
          16:53
          <br />
          22-07-2025
        </button>
      </div>
    </footer>
  );
}

export default function App() {
  return (
    <div className="relative flex h-screen flex-col overflow-hidden bg-[#2b2a33] font-['Open_Sans',sans-serif] text-[#fbfbfe]">
      <TabStrip />
      <Toolbar />
      <div className="flex min-h-0 flex-1">
        <Sidebar />
        <SentimentPage />
      </div>
      <Taskbar />
      <svg viewBox="0 0 20 28" className="pointer-events-none absolute top-[1021px] left-[1524px] h-7 w-5" aria-hidden="true">
        <path d="M.7.8v22.500l5-5 3.500 8.200 3.600-1.500-3.400-7.800h7.600z" fill="#fff" stroke="#1a1a2a" strokeWidth="1.200" />
      </svg>
    </div>
  );
}
